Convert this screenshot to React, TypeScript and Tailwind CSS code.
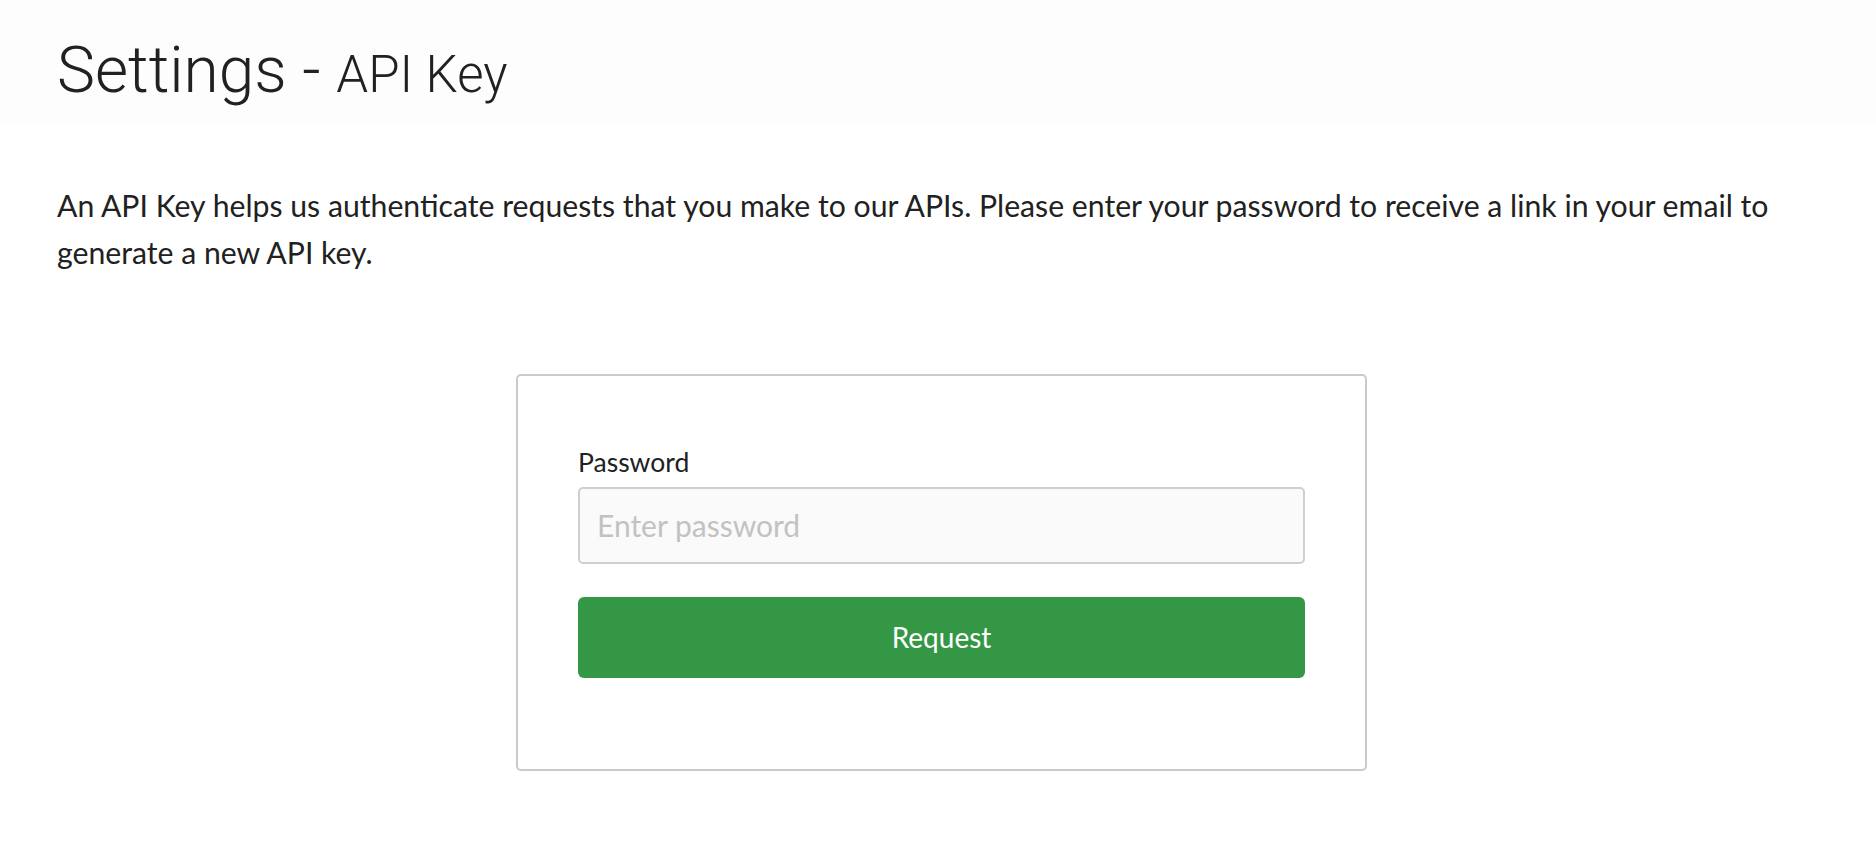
import React from "react";

export default function App() {
  return (
    <div className="min-h-[858px] w-full bg-white text-[#212121]">
      <div className="bg-[#fdfdfd] px-[57px] pt-[33px] pb-[12px]">
        <h1
          className="text-[64px] font-light leading-[1.2] text-[#212121]"
          style={{ fontFamily: "Roboto, 'Liberation Sans', sans-serif" }}
        >
          Settings - <small className="text-[51px]">API Key</small>
        </h1>
      </div>
      <div className="px-[57px]" style={{ fontFamily: "Lato, 'Liberation Sans', sans-serif" }}>
        <p className="mt-[60px] text-[30.2px] leading-[47px] text-[#212121]">
          An API Key helps us authenticate requests that you make to our APIs. Please enter your password to receive a link in your email to generate a new API key.
        </p>
        <div className="ml-[459px] mt-[98px] w-[851px] rounded-[5px] border-2 border-[#cacace] bg-white px-[60px] pt-[67px] pb-[91px]">
          <label className="mb-[5px] block text-[26.5px] leading-[39px] text-[#212121]">Password</label>
          <input
            type="password"
            placeholder="Enter password"
            className="block h-[77px] w-full rounded-[5px] border-2 border-[#cfcfcf] bg-[#fafafa] px-[17px] text-[30px] text-[#212121] outline-none placeholder:text-[#c2c2c2]"
          />
          <button className="mt-[33px] flex h-[81px] w-full items-center justify-center rounded-[6px] bg-[#349745] text-[28px] text-white">
            Request
          </button>
        </div>
      </div>
    </div>
  );
}
